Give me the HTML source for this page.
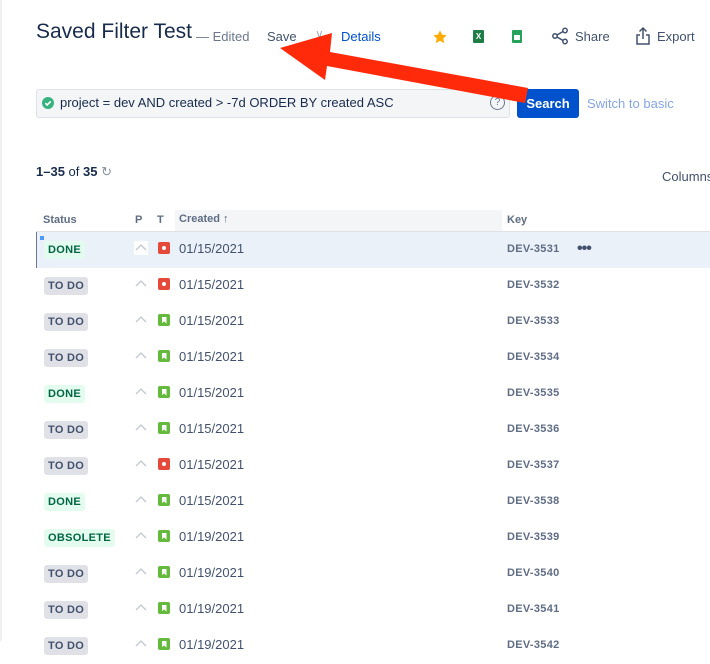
<!DOCTYPE html>
<html><head><meta charset="utf-8"><style>
*{margin:0;padding:0;box-sizing:border-box}
body{width:710px;height:641px;overflow:hidden;background:#fff;font-family:"Liberation Sans",sans-serif;position:relative;color:#172b4d}
.a{position:absolute;white-space:nowrap}
.lz{position:absolute;left:0;top:0;width:2px;height:641px;background:#f0f0f0}
.row{position:absolute;left:36px;width:674px;height:36px}
.lz2{font-size:11px;font-weight:bold;letter-spacing:.3px;padding:3px 4px;border-radius:3px;position:absolute;left:8px;top:9px;line-height:12px}
.done{background:#e3fcef;color:#006644}
.todo{background:#dfe1e6;color:#42526e}
.pr{position:absolute;left:98px;top:9px;width:14px;height:14px}
.ty{position:absolute;left:122px;top:10px;width:12px;height:12px;border-radius:2px}
.bug{background:#e5493a}
.bug:after{content:"";position:absolute;left:4px;top:4px;width:4px;height:4px;border-radius:50%;background:#fff}
.st{background:#63ba3c}
.st:after{content:"";position:absolute;left:3.5px;top:2.5px;width:5px;height:7px;background:#fff;clip-path:polygon(0 0,100% 0,100% 100%,50% 70%,0 100%)}
.dt{position:absolute;left:143px;top:9px;font-size:13px;color:#42526e}
.key{position:absolute;left:471px;top:11px;font-size:11px;font-weight:bold;color:#5e6c84;letter-spacing:.3px}
</style></head><body>
<div class="lz"></div>
<div class="a" style="left:36px;top:20px;font-size:21px;color:#172b4d">Saved Filter Test</div>
<div class="a" style="left:196px;top:29px;font-size:13px;color:#6b778c">— Edited</div>
<div class="a" style="left:267px;top:29px;font-size:13px;color:#42526e">Save</div>
<div class="a" style="left:315px;top:27px;font-size:12px;color:#a5adba">∨</div>
<div class="a" style="left:341px;top:29px;font-size:13px;color:#0052cc">Details</div>
<svg class="a" style="left:432px;top:29px" width="16" height="16" viewBox="0 0 24 24"><path d="M12 2l3 6.5 7 .8-5.2 4.8 1.5 7L12 17.6 5.7 21.1l1.5-7L2 9.3l7-.8z" fill="#ffab00"/></svg>
<div class="a" style="left:473px;top:30px;width:11px;height:13px;background:#1e7e45;border-radius:1px;color:#fff;font-size:8px;font-weight:bold;text-align:center;line-height:13px">X</div>
<div class="a" style="left:512px;top:30px;width:10px;height:13px;background:#25a35a;border-radius:1px"><div style="margin:5px 2px;width:6px;height:5px;background:#fff"></div></div>
<svg class="a" style="left:551px;top:27px" width="18" height="18" viewBox="0 0 18 18" fill="none" stroke="#42526e" stroke-width="1.5"><circle cx="4" cy="9" r="2.2"/><circle cx="14" cy="3.5" r="2.2"/><circle cx="14" cy="14.5" r="2.2"/><path d="M6 8l6-3.5M6 10l6 3.5"/></svg>
<div class="a" style="left:575px;top:29px;font-size:13px;color:#42526e">Share</div>
<svg class="a" style="left:635px;top:26px" width="16" height="20" viewBox="0 0 16 20" fill="none" stroke="#42526e" stroke-width="1.5"><path d="M8 2v11M4.5 5.5L8 2l3.5 3.5M5 9H2v9h12V9h-3"/></svg>
<div class="a" style="left:657px;top:29px;font-size:13px;color:#42526e">Export</div>

<div class="a" style="left:36px;top:89px;width:474px;height:29px;background:#f4f5f7;border:1px solid #dfe1e6;border-radius:3px"></div>
<div class="a" style="left:42px;top:97px;width:12px;height:12px;border-radius:50%;background:#36b37e"><svg width="12" height="12" viewBox="0 0 12 12" style="position:absolute;left:0;top:0"><path d="M3.3 6.2l1.8 1.8 3.6-3.6" stroke="#fff" stroke-width="1.6" fill="none"/></svg></div>
<div class="a" style="left:60px;top:95px;font-size:13px;color:#172b4d">project = dev AND created &gt; -7d ORDER BY created ASC</div>
<div class="a" style="left:490px;top:95px;width:15px;height:15px;border:1.3px solid #6b778c;border-radius:50%;font-size:10px;text-align:center;line-height:13px;color:#6b778c">?</div>
<div class="a" style="left:517px;top:89px;width:62px;height:29px;background:#0052cc;border-radius:3px;color:#fff;font-size:13px;font-weight:bold;text-align:center;line-height:29px">Search</div>
<div class="a" style="left:587px;top:96px;font-size:13px;color:#85a5e8">Switch to basic</div>

<div class="a" style="left:36px;top:164px;font-size:13px;color:#172b4d"><b>1–35</b> of <b>35</b> <span style="color:#8993a4">↻</span></div>
<div class="a" style="left:662px;top:169px;font-size:13px;color:#42526e">Columns</div>

<div class="a" style="left:175px;top:210px;width:327px;height:22px;background:#f4f5f7"></div>
<div class="a" style="left:36px;top:231px;width:674px;height:1px;background:#dfe1e6"></div>
<div class="a" style="left:43px;top:214px;font-size:11px;font-weight:bold;color:#5e6c84">Status</div>
<div class="a" style="left:135px;top:214px;font-size:11px;font-weight:bold;color:#5e6c84">P</div>
<div class="a" style="left:157px;top:214px;font-size:11px;font-weight:bold;color:#5e6c84">T</div>
<div class="a" style="left:179px;top:213px;font-size:11px;font-weight:bold;color:#5e6c84">Created ↑</div>
<div class="a" style="left:507px;top:214px;font-size:11px;font-weight:bold;color:#5e6c84">Key</div>

<div class="row" style="top:232px;background:#ebf1f9"><div style="position:absolute;left:0;top:0;width:1px;height:36px;background:#6b778c"></div><div style="position:absolute;left:4px;top:4px;width:4px;height:4px;background:#4c9aff"></div><span class="lz2 done">DONE</span><svg class="pr" viewBox="0 0 14 14" style="background:#fff"><path d="M2 9l5-5 5 5" stroke="#c1c7d0" stroke-width="1.3" fill="none"/></svg><span class="ty bug"></span><span class="dt">01/15/2021</span><span class="key">DEV-3531</span><span style="position:absolute;left:541px;top:9px;font-size:16px;line-height:16px;color:#42526e;font-weight:bold;letter-spacing:-1px">•••</span></div>
<div class="row" style="top:268px"><span class="lz2 todo">TO DO</span><svg class="pr" viewBox="0 0 14 14"><path d="M2 9l5-5 5 5" stroke="#c1c7d0" stroke-width="1.3" fill="none"/></svg><span class="ty bug"></span><span class="dt">01/15/2021</span><span class="key">DEV-3532</span></div>
<div class="row" style="top:304px"><span class="lz2 todo">TO DO</span><svg class="pr" viewBox="0 0 14 14"><path d="M2 9l5-5 5 5" stroke="#c1c7d0" stroke-width="1.3" fill="none"/></svg><span class="ty st"></span><span class="dt">01/15/2021</span><span class="key">DEV-3533</span></div>
<div class="row" style="top:340px"><span class="lz2 todo">TO DO</span><svg class="pr" viewBox="0 0 14 14"><path d="M2 9l5-5 5 5" stroke="#c1c7d0" stroke-width="1.3" fill="none"/></svg><span class="ty st"></span><span class="dt">01/15/2021</span><span class="key">DEV-3534</span></div>
<div class="row" style="top:376px"><span class="lz2 done">DONE</span><svg class="pr" viewBox="0 0 14 14"><path d="M2 9l5-5 5 5" stroke="#c1c7d0" stroke-width="1.3" fill="none"/></svg><span class="ty st"></span><span class="dt">01/15/2021</span><span class="key">DEV-3535</span></div>
<div class="row" style="top:412px"><span class="lz2 todo">TO DO</span><svg class="pr" viewBox="0 0 14 14"><path d="M2 9l5-5 5 5" stroke="#c1c7d0" stroke-width="1.3" fill="none"/></svg><span class="ty st"></span><span class="dt">01/15/2021</span><span class="key">DEV-3536</span></div>
<div class="row" style="top:448px"><span class="lz2 todo">TO DO</span><svg class="pr" viewBox="0 0 14 14"><path d="M2 9l5-5 5 5" stroke="#c1c7d0" stroke-width="1.3" fill="none"/></svg><span class="ty bug"></span><span class="dt">01/15/2021</span><span class="key">DEV-3537</span></div>
<div class="row" style="top:484px"><span class="lz2 done">DONE</span><svg class="pr" viewBox="0 0 14 14"><path d="M2 9l5-5 5 5" stroke="#c1c7d0" stroke-width="1.3" fill="none"/></svg><span class="ty st"></span><span class="dt">01/15/2021</span><span class="key">DEV-3538</span></div>
<div class="row" style="top:520px"><span class="lz2 done">OBSOLETE</span><svg class="pr" viewBox="0 0 14 14"><path d="M2 9l5-5 5 5" stroke="#c1c7d0" stroke-width="1.3" fill="none"/></svg><span class="ty st"></span><span class="dt">01/19/2021</span><span class="key">DEV-3539</span></div>
<div class="row" style="top:556px"><span class="lz2 todo">TO DO</span><svg class="pr" viewBox="0 0 14 14"><path d="M2 9l5-5 5 5" stroke="#c1c7d0" stroke-width="1.3" fill="none"/></svg><span class="ty st"></span><span class="dt">01/19/2021</span><span class="key">DEV-3540</span></div>
<div class="row" style="top:592px"><span class="lz2 todo">TO DO</span><svg class="pr" viewBox="0 0 14 14"><path d="M2 9l5-5 5 5" stroke="#c1c7d0" stroke-width="1.3" fill="none"/></svg><span class="ty st"></span><span class="dt">01/19/2021</span><span class="key">DEV-3541</span></div>
<div class="row" style="top:628px"><span class="lz2 todo">TO DO</span><svg class="pr" viewBox="0 0 14 14"><path d="M2 9l5-5 5 5" stroke="#c1c7d0" stroke-width="1.3" fill="none"/></svg><span class="ty st"></span><span class="dt">01/19/2021</span><span class="key">DEV-3542</span></div>

<svg class="a" style="left:0;top:0" width="710" height="641" viewBox="0 0 710 641"><path d="M280 48L332 33 L330 52 L528 88 L525 103 L327 66 L325 80Z" fill="#ff2a0a"/></svg>
</body></html>
